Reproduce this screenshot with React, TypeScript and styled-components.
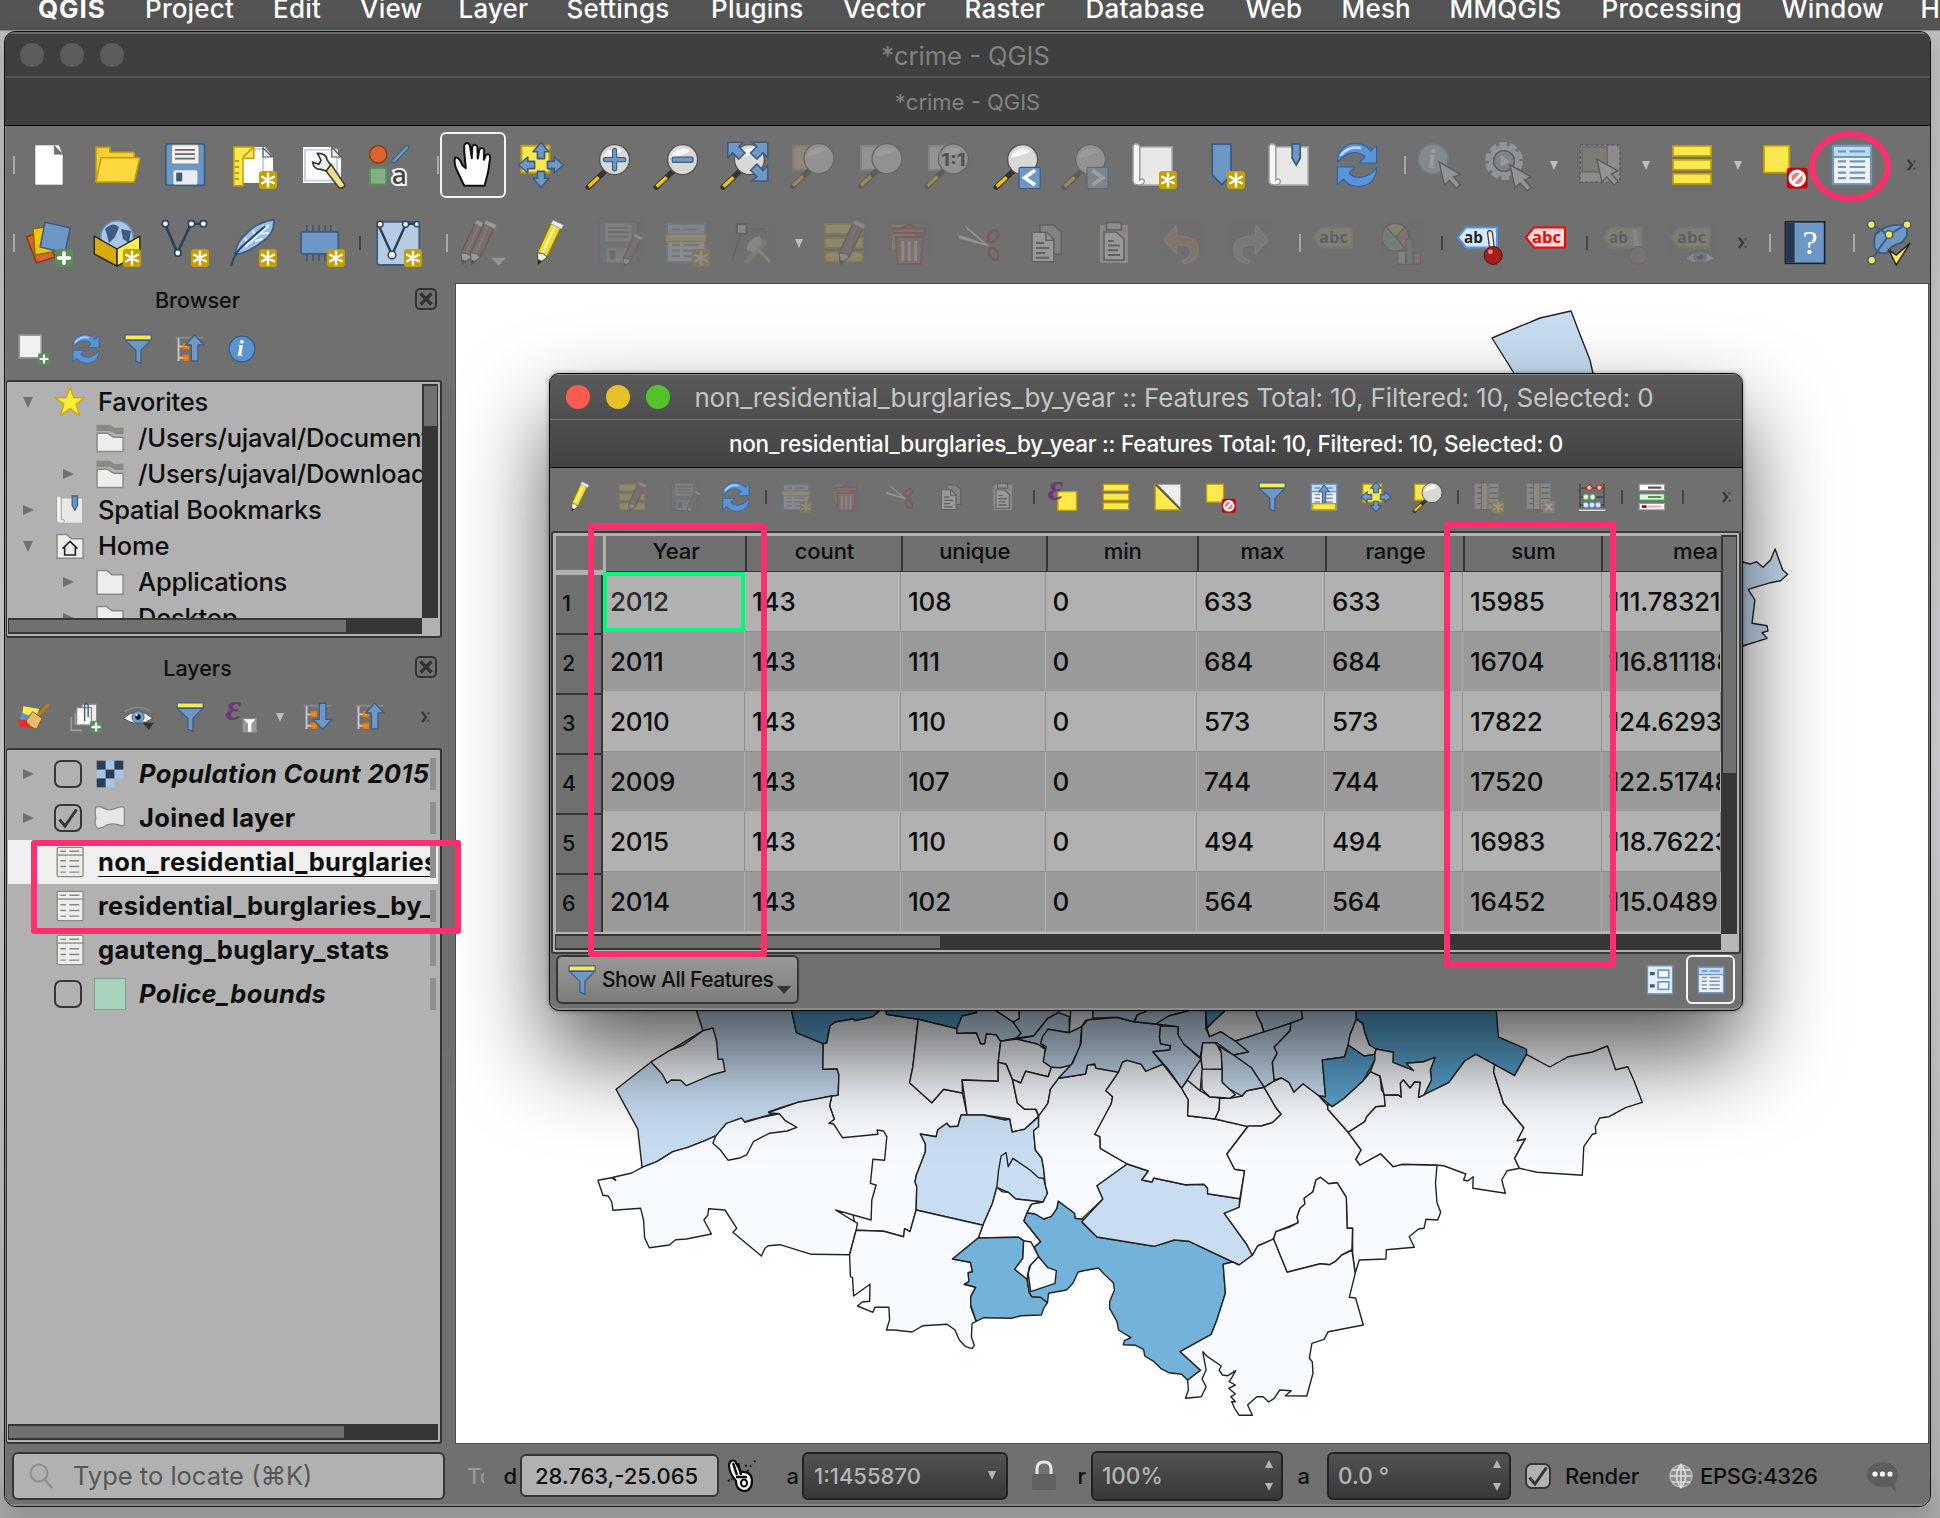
import React from "react";
import styled, { createGlobalStyle } from "styled-components";

const GlobalStyle = createGlobalStyle`
  * { box-sizing: border-box; }
  body { margin: 0; font-family: Inter, "Liberation Sans", sans-serif; color: #0e0e0e; }
`;

/* ------------------------------------------------------------------ icons */

const B = "#6d97c4";
const BD = "#3f5c80";
const Y = "#fce94f";
const YD = "#c4a000";

const Star = () => (
  <g>
    <rect x="15" y="15" width="9" height="9" rx="1.6" fill={YD} />
    <path d="M19.5 16.3V22.7M16.6 17.9L22.4 21.1M22.4 17.9L16.6 21.1" stroke="#fff" strokeWidth="1.2" strokeLinecap="round" />
  </g>
);
const Plus = () => (
  <g>
    <rect x="15" y="15" width="9" height="9" rx="1.6" fill="#5a8c5a" />
    <path d="M19.5 16.8V22.2M16.8 19.5H22.2" stroke="#fff" strokeWidth="1.7" strokeLinecap="round" />
  </g>
);
const Lens = ({ cx = 14.8, cy = 9.3 }: { cx?: number; cy?: number }) => (
  <g>
    <path d={`M${cx - 4.6} ${cy + 5.6}L${cx - 13.2} ${cy + 13.8}`} stroke="#333" strokeWidth="2.7" strokeLinecap="round" />
    <path d={`M${cx - 8} ${cy + 8.8}L${cx - 13} ${cy + 13.5}`} stroke="#f5c211" strokeWidth="1.7" />
    <circle cx={cx} cy={cy} r="7.5" fill="#d8d8d6" stroke="#555753" strokeWidth=".7" />
    <path d={`M${cx - 5.8} ${cy - 1}A6.2 6.2 0 0 1 ${cx + 4} ${cy - 4.4}Q${cx + 1} ${cy - 2} ${cx - 5.8} ${cy - 1}Z`} fill="#f6f6f6" />
  </g>
);
const Cursor = ({ x = 12, y = 11 }: { x?: number; y?: number }) => (
  <path transform={`translate(${x} ${y})`} d="M0 0L2.6 11.5L5 9L8.6 13L10.6 11.2L7.2 7.4L10.6 6Z" fill="#dedede" stroke="#2e3436" strokeWidth=".7" />
);
const Pencil = ({ body = "#f0dc3c", edge = "#8f7902", shine = "#fff9b0" }: { body?: string; edge?: string; shine?: string }) => (
  <g>
    <path d="M14.5 2L19.6 4.2L12.6 19L8.2 22.6L7.6 17Z" fill={body} stroke={edge} strokeWidth=".8" />
    <path d="M16.6 3.2L9.6 18.6" stroke={shine} strokeWidth="1" />
    <path d="M14.4 2.3L15.6 .6L20.7 3L19.8 5Z" fill="#eee" stroke="#999" strokeWidth=".4" />
    <path d="M7.6 17L8.2 22.6L12.6 19L10.4 17.2Z" fill="#eee" stroke="#444" strokeWidth=".5" />
    <path d="M8 20.4L8.1 22.8L10.2 21Z" fill="#222" />
  </g>
);
const DullPencil = () => <Pencil body="#8b6a62" edge="#4a3a35" shine="#a08a84" />;
const Label = ({ fill, edge, text, ink = "#222", len = 14.5 }: { fill: string; edge: string; text: string; ink?: string; len?: number }) => (
  <g transform="translate(-1 .2)">
    <path d="M2 9L6 4H21.5V14H6Z" fill={fill} stroke={edge} strokeWidth="1" strokeLinejoin="round" />
    <text x="5" y="11.8" fontFamily="Open Sans, sans-serif" fontWeight="700" fontSize="8" textLength={len} lengthAdjust="spacingAndGlyphs" fill={ink}>{text}</text>
  </g>
);
const Rows = () => (
  <g fill={Y} stroke={YD} strokeWidth=".9">
    <rect x="2.5" y="2.5" width="19" height="5" />
    <rect x="2.5" y="9.4" width="19" height="5" />
    <rect x="2.5" y="16.4" width="19" height="5" />
  </g>
);
const Table = () => (
  <g>
    <rect x="2.5" y="2.4" width="19" height="19.2" fill="#f2f2f2" stroke={B} strokeWidth="1.1" />
    <rect x="3" y="3" width="18" height="4.6" fill="#bcdcf4" />
    <path d="M2.5 8H21.5" stroke={B} />
    <path d="M5 5.2H9M10.8 5.2H18.6M5 10.2H9M10.8 10.2H18.6M5 13H9M10.8 13H18.6M5 15.8H9M10.8 15.8H18.6M5 18.6H9M10.8 18.6H18.6" stroke={B} strokeWidth="1.1" />
  </g>
);
const Trash = () => (
  <g>
    <rect x="1.6" y="2.6" width="12" height="13" fill="#b9a94a" stroke="#7d6d20" strokeWidth=".6" />
    <path d="M2.6 4.6H18.6V7H2.6ZM7.6 4.4Q10.6 1.5 13.6 4.4M3.8 9H17.4L16.4 22.5H4.8Z" fill="#c17070" stroke="#a02828" strokeWidth="1" />
    <path d="M7.4 11V21M10.6 11V21M13.8 11V21" stroke="#eee" strokeWidth="1.5" />
  </g>
);
const Scissors = () => (
  <g fill="none">
    <path d="M2 8.5L15 13L2 9.4ZM5 4L16 13.5L6 5Z" fill="#eee" stroke="#ddd" strokeWidth=".8" />
    <ellipse cx="18.6" cy="8.6" rx="2.2" ry="3.2" transform="rotate(35 18.6 8.6)" stroke="#8a3030" strokeWidth="1.2" />
    <ellipse cx="18.8" cy="17.4" rx="2.2" ry="3.2" transform="rotate(-30 18.8 17.4)" stroke="#8a3030" strokeWidth="1.2" />
  </g>
);
const Copy = () => (
  <g stroke="#444" strokeWidth=".8">
    <path d="M8 3H15L18.6 6.4V17.6H8Z" fill="#aaa" />
    <path d="M4 6.6H11.4L15 10.4V21.4H4Z" fill="#ededed" />
    <path d="M11 6.8V10.6H15" fill="none" />
    <path d="M6 12H10M6 14.5H12.6M6 17H10.6M6 19.4H12.6" strokeWidth="1" />
  </g>
);
const Paste = () => (
  <g stroke="#444" strokeWidth=".8">
    <rect x="4.5" y="3.5" width="13" height="18" fill="#c9b9a0" stroke="#ccc" />
    <path d="M6 6.5H12L16 10V20.5H6Z" fill="#ededed" />
    <rect x="7.2" y="1.8" width="7.5" height="3.6" fill="#ccc" />
    <path d="M8 11H11M8 13.3H14M8 15.6H13M8 18H14" strokeWidth="1" />
  </g>
);
const Floppy = () => (
  <g>
    <rect x="2.4" y="1.4" width="19.4" height="20.8" rx="1.2" fill={B} stroke={BD} strokeWidth=".9" />
    <rect x="5.2" y="1.9" width="13.8" height="9.6" rx=".8" fill="#f2f2f2" stroke="#777" strokeWidth=".4" />
    <path d="M7 4.4H17M7 6.6H17M7 8.8H17" stroke="#666" strokeWidth=".9" />
    <rect x="6.2" y="14.6" width="12" height="7.2" rx=".8" fill="#ececec" />
    <rect x="7.6" y="15.8" width="3" height="4.4" fill={BD} />
  </g>
);
const Page = () => <path d="M3 3H18L22 8V21H3Z" fill="#fff" />;
const Scroll = () => (
  <g>
    <path d="M5 3H21.5V22H5Z" fill="#e8e8e6" stroke="#aaa" strokeWidth=".8" />
    <path d="M2 3Q2 1.4 3.6 1.4T5.4 3V19.5Q6.6 18.4 7.6 19.6Q8 22 5 22Q2 22 2 20Z" fill="#f6f6f4" stroke="#999" strokeWidth=".7" />
  </g>
);
const Quad = () => (
  <g fill={B} stroke={BD} strokeWidth=".8" strokeLinejoin="round">
    {[0, 90, 180, 270].map((r) => (
      <path key={r} transform={`rotate(${r} 12 12)`} d="M12 .8L16 5.4H13.8V8.8H10.2V5.4H8Z" />
    ))}
  </g>
);
const Funnel = () => (
  <g>
    <path d="M2.5 5.5H21.5L14.2 13V22.8L10.4 21V13Z" fill={B} stroke={BD} strokeWidth=".9" strokeLinejoin="round" />
    <rect x="2.3" y="1.4" width="19.6" height="3.8" fill={Y} stroke={BD} strokeWidth=".9" />
  </g>
);
const Tree = ({ up }: { up?: boolean }) => (
  <g>
    <path d="M1 3.5H22" stroke="#8a8a84" strokeWidth="1.4" />
    <path d="M3.4 4V21M3.4 10H8M3.4 18.6H8" stroke="#c8c8c8" strokeWidth="1.4" />
    <g fill="#ffe08a" stroke="#f57900" strokeWidth="1.8">
      <rect x="7.6" y="8.4" width="2.8" height="2.8" />
      <rect x="7.6" y="17.2" width="2.8" height="2.8" />
    </g>
    <path transform={up ? undefined : "rotate(180 15.5 11.4)"} d="M15.5 1.4L22.6 9H18V21H13V9H8.6Z" fill={B} stroke={BD} strokeWidth="1" strokeLinejoin="round" />
  </g>
);
const Refresh = () => (
  <g fill="#5b93d8" stroke="#2d63a8" strokeWidth=".6" strokeLinejoin="round">
    <path d="M2.2 10.6C2 4.5 7 1 11.6 1.3C15.4 1.4 17.8 3.4 18.8 5L21.8 2.2V11H13L16 8C13 4.6 6.8 5 2.2 10.6Z" />
    <path transform="rotate(180 12 12)" d="M2.2 10.6C2 4.5 7 1 11.6 1.3C15.4 1.4 17.8 3.4 18.8 5L21.8 2.2V11H13L16 8C13 4.6 6.8 5 2.2 10.6Z" />
    <path d="M3.6 7.4Q8 2 14 3.6" stroke="#c4dcf5" strokeWidth="1.2" fill="none" />
  </g>
);
const Forbid = () => (
  <g>
    <rect x="2" y="2.4" width="12.6" height="13.4" fill={Y} stroke={YD} strokeWidth=".9" />
    <rect x="13.4" y="13.4" width="10.4" height="10.4" rx="1.4" fill="#cc0000" />
    <circle cx="18.6" cy="18.6" r="3.6" fill="#e08080" stroke="#fff" strokeWidth="1.5" />
    <path d="M16.2 21.2L21 16" stroke="#fff" strokeWidth="1.5" />
  </g>
);
const Epsilon = () => (
  <text x="-.4" y="14.6" fontFamily="Liberation Serif, serif" fontStyle="italic" fontWeight="700" fontSize="29" fill="#6b3a76">ε</text>
);
const Eye = () => (
  <g>
    <path d="M1 13Q12 3 23 13Q12 21 1 13Z" fill="#f4f4f4" stroke="#444" strokeWidth=".7" />
    <path d="M2 8Q11 2 21 7" stroke="#8a8a84" fill="none" />
    <circle cx="12" cy="12" r="4.6" fill="#729fcf" stroke={BD} strokeWidth=".7" />
    <circle cx="12" cy="12" r="2" fill="#111" />
    <circle cx="11" cy="10.6" r=".8" fill="#fff" />
  </g>
);
const TableCols = () => (
  <g>
    <rect x="2" y="2" width="18" height="19" fill="#bbb" stroke="#888" strokeWidth=".7" />
    <path d="M4 5H8M13 5H19M4 9H8M13 9H19M4 13H8M13 13H19M4 17H8M13 17H19" stroke="#555" />
    <rect x="7" y="1.5" width="5" height="20" fill="#c9c29a" stroke="#555" strokeWidth=".7" />
  </g>
);

const ICONS: Record<string, React.ReactNode> = {
  newFile: <path d="M5 2H17L19 7V22H5ZM14.6 2V6.6H19" fill="#fff" stroke="#707070" strokeWidth=".3" fillRule="evenodd" />,
  folder: (
    <g fill={Y} stroke={YD} strokeWidth=".8" strokeLinejoin="round">
      <path d="M1.5 20.4V3.2H8.4V5.6H20.6V20Z" fill="#f5cf3a" />
      <path d="M1.5 20.5L4 8.4H23.4L20.6 20.5Z" fill="#fbd83f" />
    </g>
  ),
  save: <Floppy />,
  layoutNew: (
    <g>
      <Page />
      <path d="M6 4H17V17" stroke="#c3d3f0" fill="none" />
      <path d="M2.4 3H12.4V8.6H7V22.4H2.4Z" fill={Y} stroke={YD} strokeWidth=".8" />
      <path d="M3 10H5M3 13H5M3 16H5M3 19H5M7 8L12 3.4" stroke={YD} strokeWidth=".9" />
      <path d="M17 3.4V8H21.6Z" fill="#eee" stroke="#555" strokeWidth=".6" />
      <Star />
    </g>
  ),
  layoutManager: (
    <g>
      <Page />
      <rect x="4" y="4.4" width="16" height="15.4" fill="none" stroke="#c3d3f0" />
      <path d="M17.4 3V8H22Z" fill="#eee" stroke="#555" strokeWidth=".6" />
      <path d="M14.4 12.4L17 11.6L24 22Q23.4 24 21 23.4L14 14.4Z" fill="#f1dd8a" stroke="#444" strokeWidth=".8" />
      <path d="M10.2 6.2L12 9.6L11 11.6L7.8 10.6Q8.4 14.4 12 14.2L14.6 15L16.8 12L15 9.4Q14.6 6 10.2 6.2Z" fill="#eee" stroke="#333" strokeWidth=".8" />
    </g>
  ),
  style: (
    <g>
      <circle cx="6.6" cy="6.7" r="4.3" fill="#d8652b" stroke="#8a3d12" strokeWidth=".7" />
      <path d="M14.4 10L21 3.2" stroke={BD} strokeWidth="2.4" strokeLinecap="round" />
      <path d="M14.4 10L21 3.2" stroke={B} strokeWidth="1.3" strokeLinecap="round" />
      <rect x="2.4" y="13.4" width="8.2" height="8.4" fill="#83b083" stroke="#5a8c5a" />
      <text x="13.4" y="21.6" fontFamily="Open Sans, sans-serif" fontSize="13" fontWeight="600" stroke="#f4f4f4" strokeWidth="2" paintOrder="stroke" fill="#444">a</text>
    </g>
  ),
  hand: (
    <path
      d="M7.6 22.4L4.4 15.6Q2.2 11.6 3 8.4Q5 7.6 6.6 12L8.4 13.6L7.6 5V2Q9 0 10.4 2L11.4 8.6L11.6 2.8Q13 .8 14.2 3L14.4 8.8L15.2 4.2Q17 2.6 17.6 4.8L17.4 9.4L18.6 6.8Q20.4 6 20.6 8.2L19.6 15.4L17.8 22.4Z"
      fill="#fff" stroke="#111" strokeWidth="1" strokeLinejoin="round"
    />
  ),
  panSel: (<g><rect x="2.2" y="2.4" width="14" height="13.4" fill={Y} stroke={YD} /><Quad /></g>),
  zoomIn: (<g><Lens /><path d="M14.8 4.7V13.9M10.2 9.3H19.4" stroke={BD} strokeWidth="2.6" strokeLinecap="round" /><path d="M14.8 4.7V13.9M10.2 9.3H19.4" stroke={B} strokeWidth="1.6" strokeLinecap="round" /></g>),
  zoomOut: (<g><Lens /><rect x="9.6" y="8.1" width="10.4" height="2.6" rx=".6" fill={B} stroke={BD} strokeWidth=".6" /></g>),
  zoomFull: (
    <g>
      <Lens cx={14.2} />
      <g fill={B} stroke={BD} strokeWidth=".8">
        <path d="M3.4 .6H11L8.8 2.8L12 6L8.8 9L5.8 5.8L3.4 8.4Z" />
        <path d="M23.4 .6H15.6L18 2.8L14.8 6L18 9L21 5.8L23.4 8.4Z" />
        <path d="M23.4 20H15.6L18 17.8L14.8 14.6L18 11.6L21 14.8L23.4 12.2Z" />
      </g>
    </g>
  ),
  zoomSel: (<g><rect x="2" y="2.4" width="10" height="12" fill={Y} stroke={YD} /><Lens cx={15} cy={8.8} /></g>),
  zoomSelOff: (<g><rect x="2" y="2.4" width="10" height="12" fill="#c9b88a" stroke="#a89660" /><Lens cx={15} cy={8.8} /></g>),
  zoomLayer: (<g><rect x="2" y="2.4" width="10" height="12" fill="#ddd" stroke="#aaa" /><Lens cx={15} cy={8.8} /></g>),
  zoomNative: (<g><rect x="2" y="2.4" width="10" height="12" fill="#ddd" stroke="#aaa" /><Lens cx={14.2} cy={9} /><text x="8" y="12.4" fontSize="9" fontWeight="700" textLength="12.4" lengthAdjust="spacingAndGlyphs" fill="#111">1:1</text></g>),
  zoomLast: (<g><Lens /><rect x="13" y="13.2" width="10.6" height="10.6" rx=".8" fill={B} stroke={BD} strokeWidth=".6" /><path d="M21 14.6L15.8 18.4L21 22" stroke="#fff" strokeWidth="1.8" fill="none" /></g>),
  zoomNext: (<g><Lens /><rect x="13" y="13.2" width="10.6" height="10.6" rx=".8" fill="#9fb4c6" stroke={BD} strokeWidth=".6" /><path d="M15.6 14.6L20.8 18.4L15.6 22" stroke="#fff" strokeWidth="1.8" fill="none" /></g>),
  newMap: (<g><Scroll /><Star /></g>),
  newBookmark: (<g><path d="M7.6 1.6H17V17L12.4 21.8L7.6 17Z" fill={B} stroke={BD} strokeWidth=".9" /><Star /></g>),
  bookmarks: (<g><Scroll /><path d="M13.6 1.4H17.6V8.6L15.6 12L13.6 8.6Z" fill={B} stroke={BD} strokeWidth=".9" /></g>),
  refresh: <Refresh />,
  identify: (
    <g>
      <circle cx="8.6" cy="9" r="7.6" fill="#a9c0d2" stroke="#7d8c98" />
      <text x="6" y="13.6" fontFamily="Liberation Serif, serif" fontStyle="italic" fontWeight="700" fontSize="14" fill="#fff">i</text>
      <Cursor x={11.6} y={10.6} />
    </g>
  ),
  action: (
    <g>
      <circle cx="10" cy="10" r="7.8" fill="none" stroke="#dcdcdc" strokeWidth="3.4" strokeDasharray="3.6 1.3" />
      <circle cx="10" cy="10" r="6.6" fill="#9fb0bc" stroke="#ddd" strokeWidth="2.2" />
      <circle cx="10" cy="10" r="5.2" fill="none" stroke="#333" strokeWidth=".7" />
      <path d="M8.4 7L13 10L8.4 13Z" fill="#eee" />
      <Cursor x={13} y={12} />
    </g>
  ),
  selectRect: (
    <g>
      <rect x="2" y="2" width="20" height="18.6" fill="#c8c8c8" stroke="#333" strokeDasharray="1.6 1" strokeWidth=".8" />
      <rect x="3" y="3" width="12.6" height="12.4" fill="#a19a7c" stroke="#555" strokeWidth=".7" />
      <Cursor x={10.4} y={9} />
    </g>
  ),
  rows: <Rows />,
  deselect: <Forbid />,
  table: <Table />,
  dataSource: (
    <g strokeWidth=".8" stroke="#333">
      <path d="M.8 9L9 6L15 19L5.8 22Z" fill="#d8652b" stroke="#8a3d12" />
      <path d="M4 5L14 3L16 16L5 18Z" fill="#edc70a" stroke="#8a6d02" />
      <path d="M10 1.6L22.6 4.4L20 17L7.6 14Z" fill={B} stroke={BD} />
      <g stroke="none"><Plus /></g>
    </g>
  ),
  geopackage: (
    <g stroke="#222" strokeWidth=".7" strokeLinejoin="round">
      <circle cx="12" cy="9" r="8" fill="#a9c8e8" stroke={B} />
      <path d="M6 5Q10 1 13 4L11 9L8 12L7 8ZM14 5L19 6L18 12L15 10Z" fill={BD} stroke="none" />
      <path d="M.6 8.6L12 15V23.6L.6 17.4Z" fill="#d8aa0c" />
      <path d="M23.4 8.6L12 15V23.6L23.4 17.4Z" fill="#fdf04f" />
      <g stroke="none"><Star /></g>
    </g>
  ),
  shapefile: (
    <g>
      <path d="M2 2.4L8.2 17L15 2.4H21" fill="none" stroke="#26415c" strokeWidth="1.3" />
      <g fill="#fff" stroke="#26415c" strokeWidth=".8"><circle cx="2.2" cy="2.4" r="1.6" /><circle cx="8.4" cy="17" r="1.6" /><circle cx="15.2" cy="2.4" r="1.6" /><circle cx="21.2" cy="2.4" r="1.6" /></g>
      <Star />
    </g>
  ),
  spatialite: (
    <g>
      <path d="M3 17Q4 11 9 7Q14 1.6 22.4 .4Q23 7 17 11Q12 15.4 5 17.6Z" fill="#9fc0e2" stroke={BD} strokeWidth=".9" />
      <path d="M8 14L20 3M8 9.4L9.4 12.6M12 5.8L13.6 9.4M17 3L17.6 5.6M13 11L17 10M16 7.4L20 7" stroke="#eaf2fb" strokeWidth="1" fill="none" />
      <path d="M1.2 23.6Q2 17.4 8 12.4L18 3.6" stroke="#22486e" fill="none" />
      <Star />
    </g>
  ),
  memory: (
    <g>
      <path d="M5 3V21M8 3V21M11 3V21M14 3V21M17 3V16" stroke={BD} strokeWidth=".9" />
      <rect x="2" y="6.4" width="18.6" height="11" rx="1" fill={B} stroke={BD} strokeWidth=".9" />
      <Star />
    </g>
  ),
  virtual: (
    <g>
      <rect x="1.6" y="1.4" width="21" height="21.6" rx="1" fill="#b7cbe3" stroke={BD} strokeWidth=".9" />
      <path d="M2 2.4L9 18L16 2.4H22" fill="none" stroke="#26415c" strokeWidth="1.2" />
      <g fill="#fff" stroke="#26415c" strokeWidth=".7"><circle cx="3" cy="2.6" r="1.5" /><circle cx="9" cy="18" r="1.9" /><circle cx="15.8" cy="2.6" r="1.5" /><circle cx="21.4" cy="2.6" r="1.3" /></g>
      <Star />
    </g>
  ),
  pencils: (<g><g transform="translate(-6 0)"><DullPencil /></g><g transform="translate(-1.4 0)"><DullPencil /></g><path d="M16.6 19.4H24L20.3 23.4Z" fill="#ddd" /></g>),
  pencil: <g transform="translate(-2 0)"><Pencil /></g>,
  saveEdits: (<g><g opacity=".6"><Floppy /></g><g transform="translate(9 7) scale(.74)"><DullPencil /></g></g>),
  addFeature: (<g><Table /><rect x="2" y="7.6" width="20" height="3.6" fill="#f6f0b0" stroke={YD} strokeWidth=".7" /><Star /></g>),
  vertex: (
    <g>
      <path d="M6 5L1 21M6 5H18" stroke="#444" strokeWidth=".8" />
      <rect x="3.4" y="2.6" width="4.8" height="4.8" fill="#eee" stroke="#333" />
      <path d="M8 22L17.6 10.8" stroke="#b9ab6a" strokeWidth="2.6" />
      <path d="M9 15Q10 10 14.6 9.4L15.6 11.4L12 16ZM14 15L20 21.6" stroke="#ddd" strokeWidth="1.4" fill="#ddd" />
    </g>
  ),
  editRows: (<g><Rows /><g transform="translate(2 0)"><DullPencil /></g></g>),
  trash: <Trash />,
  cut: <Scissors />,
  copy: <Copy />,
  paste: <Paste />,
  undo: <path d="M8 3L2 10.6L8.4 17.4V13Q16 12.4 15.4 17Q15 20 11 20.8L12 22.4Q19 21 19 15Q19 8.6 8.4 8.6Z" fill="#c48a66" stroke="#e0b090" strokeWidth=".6" />,
  redo: <path d="M14 3L20 10.6L13.6 17.4V13Q6 12.4 6.6 17Q7 20 11 20.8L10 22.4Q3 21 3 15Q3 8.6 13.6 8.6Z" fill="#8aa488" stroke="#b0c8b0" strokeWidth=".6" />,
  label: <Label fill="#bfb88a" edge="#9a936a" text="abc" />,
  diagram: (
    <g stroke="#444" strokeWidth=".6">
      <circle cx="8.4" cy="9" r="7" fill="#8fae8f" />
      <path d="M8.4 9L3.6 4Q8 .4 13 4Z" fill="#d8cf70" />
      <path d="M8.4 9L13 4Q17 9 12.6 14.6Z" fill="#b87a72" />
      <rect x="9.4" y="16" width="4" height="6.6" fill="#d8cf90" /><rect x="13.6" y="10" width="3.4" height="12.6" fill="#7a9a84" /><rect x="17.4" y="17" width="3.4" height="5.6" fill="#b87a82" />
    </g>
  ),
  labelPin: (<g><Label fill="#d8e8fa" edge="#4f97e8" text="ab" len={9.4} /><path d="M17 7L18 14.6" stroke="#333" strokeWidth="3" strokeLinecap="round" /><path d="M17 7L18 14.6" stroke="#eee" strokeWidth="1.8" strokeLinecap="round" /><circle cx="18.6" cy="18.2" r="4.5" fill="#a81c1c" stroke="#5e0d0d" strokeWidth=".5" /><circle cx="17.2" cy="16.4" r="1.2" fill="#e08a8a" /></g>),
  labelRed: <Label fill="#fde0e0" edge="#f00" text="abc" ink="#f00" />,
  labelPinOff: (<g><Label fill="#bfb88a" edge="#9a936a" text="ab" len={9.4} /><path d="M17 7L18 14.6" stroke="#ddd" strokeWidth="2.4" strokeLinecap="round" /><circle cx="18.6" cy="18.2" r="4.5" fill="#9a7a7a" stroke="#555" strokeWidth=".5" /></g>),
  labelEye: (<g><Label fill="#bfb88a" edge="#9a936a" text="abc" /><g transform="translate(7.6 11) scale(.66)"><Eye /></g></g>),
  help: (
    <g>
      <rect x="2.2" y="1.4" width="19.6" height="20.8" fill={B} stroke="#1c222b" strokeWidth=".8" />
      <rect x="2.6" y="1.8" width="4.2" height="20" fill="#26384e" />
      <text x="10.8" y="17.4" fontFamily="Liberation Serif, serif" fontSize="17" fill="#fff">?</text>
    </g>
  ),
  topology: (
    <g>
      <path d="M5 8Q10 2 20 3Q23 8 18 12Q13 13 11 17Q4 18 4.6 11Z" fill={B} stroke={BD} />
      <path d="M3 2.6L12 8L20.6 2.6M12 8L3 20.6" stroke={BD} fill="none" />
      <g fill={Y} stroke={BD} strokeWidth=".7"><circle cx="3.2" cy="2.8" r="1.9" /><circle cx="21" cy="2.8" r="1.9" /><circle cx="12" cy="7.8" r="1.9" /><circle cx="3.4" cy="20.6" r="1.9" /></g>
      <path d="M12 15.6L15.6 18L22.6 12L15.6 23Z" fill={Y} stroke="#222" strokeWidth=".7" />
    </g>
  ),
  addLayer: (<g><rect x="1" y="1.6" width="16.4" height="17" fill="#f1f1f1" stroke="#9a9a94" strokeWidth="1.2" /><g transform="translate(.4 .4) scale(.98)"><Plus /></g></g>),
  funnel: <Funnel />,
  collapse: <Tree up />,
  expand: <Tree />,
  info: (<g><circle cx="12" cy="12" r="9.6" fill="#5b93cf" stroke="#2d5d96" strokeWidth=".9" /><text x="8.4" y="17.6" fontFamily="Liberation Serif, serif" fontStyle="italic" fontWeight="700" fontSize="17" fill="#fff">i</text></g>),
  styling: (
    <g>
      <path d="M4 4L16 6L13 13L3 11Z" fill={Y} /><path d="M3 9L9 11L8 18L1 15Z" fill="#5b93cf" /><path d="M0 14L8 14L13 20L2 19.6Z" fill="#ef2929" />
      <path d="M22.4 3L15 11" stroke="#c17d11" strokeWidth="2.2" strokeLinecap="round" />
      <path d="M11 8L18 13L14 21Q9 20 6 15Z" fill="#e9b96e" stroke="#8f5902" strokeWidth=".7" />
    </g>
  ),
  addGroup: (<g><path d="M1 12V22H9M4 9V18" stroke="#a0a09a" strokeWidth="1.2" fill="none" /><rect x="9" y="2.4" width="11" height="13" fill="#eee" stroke="#888" /><rect x="5" y="5" width="11" height="13" fill="#fff" stroke="#888" /><path d="M11 15V3Q12.4 0 13.6 3V12" fill="none" stroke={BD} strokeWidth="1.1" /><Plus /></g>),
  eye: (<g><Eye /><path d="M15.4 16.4H24L20 21.6Z" fill="#333" /></g>),
  exprFilter: (<g><Epsilon /><rect x="12.4" y="13" width="10.6" height="10.6" fill="#999" /><path d="M13.4 13.6H22L19 17V23H16.6V17Z" fill="#fff" /></g>),
  exprSelect: (<g><rect x="7.4" y="8" width="14" height="14" fill={Y} stroke={YD} /><Epsilon /></g>),
  invert: (<g><path d="M2.4 2.4V21.6H21.6Z" fill={Y} stroke={YD} /><path d="M4 2.4H21.6V20.6Z" fill="#eee" stroke="#888" strokeWidth=".7" /><path d="M2.6 2.6L21.6 21.6" stroke="#555" strokeWidth="1.2" /></g>),
  moveTop: (<g><Table /><rect x="3.6" y="17" width="17" height="4.6" fill={Y} stroke={YD} /><path d="M12 3L16 8H13.2V16H10.8V8H8Z" fill={B} stroke={BD} strokeWidth=".8" /></g>),
  newField: (<g><TableCols /><Star /></g>),
  delField: (<g><TableCols /><rect x="14" y="15" width="9" height="9" fill="#b99" /><path d="M16 17L21 22M21 17L16 22" stroke="#fff" strokeWidth="1.4" /></g>),
  abacus: (
    <g>
      <path d="M3 2V20M21 2V20M3 5.4H21M3 12H21M3 18H21M1.6 22.4H22.4" stroke="#444" strokeWidth="1" />
      <path d="M2 22H22" stroke="#ddd" strokeWidth="1.2" />
      <g strokeWidth=".7"><g fill="#fbb" stroke="#c00"><circle cx="10" cy="5" r="2" /><circle cx="17.6" cy="5" r="2" /></g><g fill="#dfd" stroke="#7a7"><circle cx="7.4" cy="12" r="2" /><circle cx="12.4" cy="12" r="2" /></g><g fill="#def" stroke={B}><circle cx="7.4" cy="18" r="2" /><circle cx="12" cy="18" r="2" /><circle cx="16.6" cy="18" r="2" /></g></g>
    </g>
  ),
  conditional: (
    <g strokeWidth=".9">
      <rect x="2.4" y="2.4" width="19" height="4.8" fill="#fff" stroke="#999" /><path d="M9 5H19" stroke="#555" strokeWidth="1.6" />
      <rect x="2.4" y="9.6" width="19" height="4.8" fill="#dff5df" stroke="#4e9a4e" /><path d="M9 12H19" stroke="#4e9a4e" strokeWidth="1.6" />
      <rect x="2.4" y="16.8" width="19" height="4.8" fill="#fff" stroke="#999" /><path d="M4.4 19.2H8" stroke="#b00" strokeWidth="2" /><path d="M9 19.2H19" stroke="#f0b0b0" strokeWidth="1.6" />
    </g>
  ),
  formView: (
    <g>
      <rect x="2.6" y="1.4" width="18.8" height="21" fill="#e6eef7" stroke={B} />
      <path d="M4.4 7.2H8M4.4 16.4H8" stroke={BD} strokeWidth="2.4" />
      <g fill="#fff" stroke={B} strokeWidth="1.3"><rect x="10.6" y="4.6" width="8" height="5.6" /><rect x="10.6" y="13.4" width="8" height="5.6" /></g>
    </g>
  ),
  star: <path d="M12 .8L14.8 8.8H23L16.6 13.6L19 22L12 17L5 22L7.4 13.6L1 8.8H9.2Z" fill="#fcef3c" stroke="#cfa900" strokeWidth="1.1" strokeLinejoin="round" />,
  dir: <path d="M2.3 3.4H9.4L13.4 6.6H21.8V21.2H2.3Z" fill="#eee" stroke="#8a8a84" strokeWidth="1.1" />,
  dirStack: (<g><path d="M1.8 2H12L15 4.4H22.2V9H16L12 6.8H1.8Z" fill="#8a8a84" /><path d="M2.3 8.4H10L14.6 11.4H21.8V22.2H2.3Z" fill="#eee" stroke="#8a8a84" strokeWidth="1.1" /></g>),
  home: (<g><path d="M2.3 3.4H9.4L13.4 6.6H21.8V21.2H2.3Z" fill="#eee" stroke="#8a8a84" strokeWidth="1.1" /><path d="M6.4 14L12 8.6L17.6 14M8 13V18.8H16V13" fill="none" stroke="#222" strokeWidth="1.2" /></g>),
  raster: (
    <g fill="#2a3d54">
      <path d="M2 2H22V15.3H15.3V22H2Z" fill="#aac4e4" />
      <rect x="2" y="2" width="6.7" height="6.7" /><rect x="15.3" y="2" width="6.7" height="6.7" /><rect x="8.7" y="8.7" width="6.6" height="6.6" /><rect x="2" y="15.3" width="6.7" height="6.7" />
    </g>
  ),
  polygon: <path d="M1.4 4Q4 2.4 8 5Q12 7 17 4.4Q22.6 2.6 22.8 5V16Q23 18.8 18 17Q13 15.6 9 17.6Q3 21.4 1.6 18.4Q.2 16 1.4 12Q.4 7 1.4 4Z" fill="#e6e6e4" stroke="#8a8a84" />,
  sheet: (
    <g>
      <rect x="2.4" y="1" width="19.4" height="22" rx="1" fill="#ededeb" stroke="#8a8a84" />
      <path d="M2.4 6.8H21.8" stroke="#8a8a84" />
      <path d="M4.8 4H9M11.6 4H19M4.8 11H9M11.6 11H19M4.8 15.4H9M11.6 15.4H19M4.8 19.6H9M11.6 19.6H19" stroke="#8a8a84" strokeWidth="1.1" />
    </g>
  ),
};

const Svg = styled.svg<{ $size: number; $alpha: number }>`
  display: block;
  flex: none;
  width: ${(p) => p.$size}px;
  height: ${(p) => p.$size}px;
  opacity: ${(p) => p.$alpha};
  overflow: visible;
`;
const Icon = ({ name, size = 48, alpha = 1 }: { name: string; size?: number; alpha?: number }) => (
  <Svg $size={size} $alpha={alpha} viewBox="0 0 24 24" fill="none">{ICONS[name]}</Svg>
);

/* ---------------------------------------------------------------- toolbar */

const Bar = styled.div<{ $h: number; $pad?: number; $lift?: number }>`
  display: flex;
  align-items: center;
  height: ${(p) => p.$h}px;
  padding: 0 0 ${(p) => p.$lift ?? 0}px ${(p) => p.$pad ?? 0}px;
`;
const Slot = styled.div<{ $w: number }>`
  flex: none;
  display: flex;
  align-items: center;
  justify-content: center;
  width: ${(p) => p.$w}px;
`;
const ActiveSlot = styled.div`
  flex: none;
  display: grid;
  place-items: center;
  width: 66px;
  height: 66px;
  margin: 0 1px;
  border: 2px solid #f2f2f2;
  border-radius: 6px;
`;
const Handle = styled.div<{ $w: number }>`
  flex: none;
  width: ${(p) => p.$w}px;
  height: 18px;
  border-right: 2px solid #a8a8a8;
`;
const Divider = styled.div<{ $w: number }>`
  flex: none;
  display: flex;
  justify-content: center;
  width: ${(p) => p.$w}px;
  &::after { content: ""; width: 2px; height: 14px; background: #444; }
`;
const Caret = styled.div<{ $w: number; $c?: string }>`
  flex: none;
  display: flex;
  justify-content: center;
  width: ${(p) => p.$w}px;
  &::after {
    content: "";
    border: 4.5px solid transparent;
    border-top: 9px solid ${(p) => p.$c ?? "#bdbdbd"};
    border-bottom: 0;
  }
`;
const More = styled.div<{ $w: number }>`
  flex: none;
  display: flex;
  justify-content: center;
  width: ${(p) => p.$w}px;
`;
const MoreIcon = () => (
  <svg width="12" height="12" viewBox="0 0 12 12"><path d="M2 1L6 6L2 11" fill="none" stroke="#3a3a3a" strokeWidth="2.4" /><path d="M8.5 1V3.4M8.5 8.6V11" stroke="#4a4a4a" strokeWidth="2" /></svg>
);

const Tools = ({ items, slot, size }: { items: string; slot: number; size: number }) => (
  <>
    {items.split(" ").map((t, i) => {
      const [k, n] = t.split(":");
      if (k === "|") return <Divider key={i} $w={+n} />;
      if (k === "h") return <Handle key={i} $w={+n} />;
      if (k === "v") return <Caret key={i} $w={+n} />;
      if (k === ">") return <More key={i} $w={+n}><MoreIcon /></More>;
      if (k[0] === "*") return <ActiveSlot key={i}><Icon name={k.slice(1)} size={size} /></ActiveSlot>;
      const alpha = k[0] === "-" ? 0.32 : k[0] === "~" ? 0.2 : 1;
      return <Slot key={i} $w={slot}><Icon name={alpha < 1 ? k.slice(1) : k} size={size} alpha={alpha} /></Slot>;
    })}
  </>
);

/* ------------------------------------------------------------- main frame */

const Desktop = styled.div`
  position: relative;
  width: 1940px;
  height: 1518px;
  overflow: hidden;
  background: linear-gradient(#bdbdbb, #cfd0d2 50%, #b4b4b4 97%, #a4a6a5);
`;
const MenuBar = styled.div`
  display: flex;
  align-items: center;
  height: 31px;
  padding: 0 0 14px 38px;
  background: #545454;
  border-bottom: 1px solid #8d8d8d;
  color: #fff;
  font-size: 26px;
  font-weight: 500;
  overflow: hidden;
  white-space: nowrap;
`;
const MenuItem = styled.div<{ $w: number; $bold?: boolean }>`
  flex: none;
  width: ${(p) => p.$w}px;
  font-weight: ${(p) => (p.$bold ? 700 : 500)};
  letter-spacing: ${(p) => (p.$bold ? "0.9px" : "0.2px")};
`;
const Frame = styled.div`
  width: 1927px;
  height: 1476px;
  margin-left: 4px;
  border: 1px solid #141414;
  border-radius: 11px 11px 12px 12px;
  background: #707070;
  overflow: hidden;
  box-shadow: 0 8px 20px rgba(0, 0, 0, 0.16);
`;
const Title = styled.div<{ $h: number; $size: number; $c: string; $bg: string; $top?: string; $bottom?: string; $weight?: number }>`
  display: flex;
  align-items: center;
  justify-content: center;
  height: ${(p) => p.$h}px;
  border-top: ${(p) => p.$top ?? "none"};
  border-bottom: ${(p) => p.$bottom ?? "none"};
  background: ${(p) => p.$bg};
  color: ${(p) => p.$c};
  font-size: ${(p) => p.$size}px;
  font-weight: ${(p) => p.$weight ?? 400};
  white-space: nowrap;
`;
const Lights = styled.div<{ $gap: number; $left: number }>`
  display: flex;
  gap: ${(p) => p.$gap}px;
  margin-left: ${(p) => p.$left}px;
`;
const Dot = styled.i<{ $c: string }>`
  width: 24px;
  height: 24px;
  border-radius: 50%;
  background: ${(p) => p.$c};
`;
const TitleText = styled.span<{ $ls?: number }>`
  flex: 1;
  text-align: center;
  letter-spacing: ${(p) => p.$ls ?? 0}px;
`;
const Balance = styled.span<{ $w: number }>`
  width: ${(p) => p.$w}px;
`;
const Content = styled.div`
  padding-left: 1px;
  background: linear-gradient(90deg, #7c7c7c 1px, #707070 1px);
`;
const Work = styled.div`
  display: flex;
  height: 1161px;
`;
const Dock = styled.div`
  flex: none;
  width: 449px;
`;
const Canvas = styled.div`
  width: 1474px;
  border: 1px solid #4f4f4f;
  background: #fff;
`;
const DockTitle = styled.div<{ $h: number; $mt?: number }>`
  display: grid;
  grid-template-columns: 386px 22px;
  align-items: center;
  justify-content: end;
  column-gap: 12px;
  width: 431px;
  height: ${(p) => p.$h}px;
  margin-top: ${(p) => p.$mt ?? 0}px;
  text-align: center;
  font-size: 21.5px;
  font-weight: 500;
`;
const DockName = styled.span`
  padding-right: 25px;
`;
const Close = styled.span`
  display: grid;
  place-items: center;
  width: 22px;
  height: 22px;
  margin-top: -2px;
  border: 2px solid #333;
  border-radius: 5px;
`;
const CloseIcon = () => (
  <Close><svg width="14" height="14" viewBox="0 0 14 14"><path d="M1.5 1.5L12.5 12.5M12.5 1.5L1.5 12.5" stroke="#333" strokeWidth="3.4" /></svg></Close>
);
const ListFrame = styled.div<{ $h: number }>`
  display: flex;
  flex-direction: column;
  width: 436px;
  height: ${(p) => p.$h}px;
  padding: 2px 2px 2px 1px;
  border: 2px solid #363636;
  border-left-width: 1px;
  border-radius: 3px;
  background: #b1b1b1;
`;
const ListArea = styled.div`
  flex: 1;
  min-height: 0;
  display: flex;
`;
const List = styled.div`
  flex: 1;
  min-width: 0;
  overflow: hidden;
`;
const Row = styled.div<{ $h: number; $indent: number; $selected?: boolean; $bold?: boolean; $italic?: boolean }>`
  display: flex;
  align-items: center;
  height: ${(p) => p.$h}px;
  padding-left: ${(p) => p.$indent}px;
  background: ${(p) => (p.$selected ? "#f0f0f0" : "none")};
  font-size: 25.5px;
  font-weight: ${(p) => (p.$bold ? 700 : 450)};
  font-style: ${(p) => (p.$italic ? "italic" : "normal")};
  white-space: nowrap;
  overflow: hidden;
`;
const Arrow = styled.span<{ $open?: boolean; $hidden?: boolean; $w: number }>`
  flex: none;
  width: ${(p) => p.$w}px;
  visibility: ${(p) => (p.$hidden ? "hidden" : "visible")};
  &::before {
    content: "";
    display: block;
    width: 0;
    border: 5.5px solid transparent;
    ${(p) => (p.$open ? "border-top: 11px solid #707070; border-bottom: 0;" : "border-left: 11px solid #707070; border-right: 0;")}
  }
`;
const RowText = styled.span<{ $gap: number; $under?: boolean; $ls?: number }>`
  flex: 1;
  min-width: 0;
  margin-left: ${(p) => p.$gap}px;
  overflow: hidden;
  letter-spacing: ${(p) => p.$ls ?? -0.2}px;
  line-height: 1.35;
  ${(p) => p.$under && "text-decoration: underline; text-decoration-thickness: 1px; text-underline-offset: 5px; text-decoration-skip-ink: none;"}
`;
const Check = styled.span<{ $size: number }>`
  flex: none;
  display: grid;
  place-items: center;
  width: ${(p) => p.$size}px;
  height: ${(p) => p.$size}px;
  border: 2px solid #363636;
  border-radius: 7px;
`;
const CheckMark = () => (
  <svg width="22" height="22" viewBox="0 0 22 22"><path d="M2.5 12.5L8 19L19.5 2.5" fill="none" stroke="#363636" strokeWidth="3" /></svg>
);
const Swatch = styled.span`
  flex: none;
  width: 32px;
  height: 32px;
  border: 1px solid #7fa08f;
  background: #a8d3bd;
`;
const Indicator = styled.span`
  flex: none;
  width: 6px;
  height: 32px;
  margin: 0 2px 0 -2px;
  background: #8f8f8f;
`;
const VTrack = styled.div<{ $thumb: number }>`
  flex: none;
  width: 16px;
  padding: 2px 1px 0 2px;
  background: #363636;
  &::before { content: ""; display: block; height: ${(p) => p.$thumb}px; background: #707070; }
`;
const HTrack = styled.div<{ $thumb: number; $right?: number }>`
  flex: none;
  height: 16px;
  margin-right: ${(p) => p.$right ?? 0}px;
  padding: 2px 2px 2px 1px;
  background: #363636;
  &::before { content: ""; display: block; width: ${(p) => p.$thumb}px; height: 12px; background: #707070; }
`;

type TreeItem = { x: number; arrow?: "open" | "closed"; icon: string; text: string };
const BROWSER: TreeItem[] = [
  { x: 15, arrow: "open", icon: "star", text: "Favorites" },
  { x: 55, icon: "dirStack", text: "/Users/ujaval/Documents" },
  { x: 55, arrow: "closed", icon: "dirStack", text: "/Users/ujaval/Downloads" },
  { x: 15, arrow: "closed", icon: "bookmarks", text: "Spatial Bookmarks" },
  { x: 15, arrow: "open", icon: "home", text: "Home" },
  { x: 55, arrow: "closed", icon: "dir", text: "Applications" },
  { x: 55, arrow: "closed", icon: "dir", text: "Desktop" },
];

type LayerItem = { arrow?: boolean; check?: boolean; checked?: boolean; icon: string; text: string; italic?: boolean; selected?: boolean };
const LAYERS: LayerItem[] = [
  { arrow: true, check: true, icon: "raster", text: "Population Count 2015", italic: true },
  { arrow: true, check: true, checked: true, icon: "polygon", text: "Joined layer" },
  { icon: "sheet", text: "non_residential_burglaries_by_year", selected: true },
  { icon: "sheet", text: "residential_burglaries_by_year" },
  { icon: "sheet", text: "gauteng_buglary_stats" },
  { check: true, icon: "swatch", text: "Police_bounds", italic: true },
];

/* -------------------------------------------------------------------- map */

type Pt = [number, number];
const sheet = (ox: number, oy: number, sx: number, sy: number) => (s: string): Pt[] =>
  s.trim().split(/\s+/).map((p) => {
    const [x, y] = p.split(",").map(Number);
    return [ox + x / sx, oy + y / sy] as Pt;
  });
const w = sheet(580, 1000, 2.8, 3);
const e = sheet(1080, 1000, 2.7034, 3);
const n = sheet(1140, 360, 2.376, 3);
const c = sheet(0, 0, 1, 1);
const WHITE = "#f7fbff";
const LIGHT = "#c8ddf2";
const MID = "#73b2d9";
const DEEP = "#5ba4d0";

const REGIONS: [string, Pt[]][] = [
  [LIGHT, c("1492,338 1540,318 1571,311 1579,332 1590,360 1594,378 1517,378")],
  [LIGHT, n("1420,606 1432,606 1450,612 1465,605 1480,622 1498,600 1509,567 1527,630 1539,643 1522,662 1498,668 1445,688 1461,720 1454,790 1490,797 1492,813 1478,818 1490,835 1432,858 1420,860")],
  [LIGHT, w("320,10 344,92 199,186 101,268 162,388 163,400 174,502 215,485 260,455 300,443 345,424 375,410 470,362 540,342 528,336 570,320 610,307 645,302 690,291 723,286 725,225 720,206 680,208 681,131 606,98 588,10")],
  [WHITE, w("344,92 372,84 382,120 387,178 400,178 406,214 370,224 298,257 282,241 255,240 244,250 230,222 199,186 250,152 290,135")],
  [DEEP, w("588,10 606,98 681,131 691,129 700,78 715,66 765,57 770,62 820,50 842,28 842,10")],
  [WHITE, w("842,10 838,33 820,50 770,62 765,57 715,66 700,78 691,129 681,131 680,208 720,206 725,225 723,286 705,288 699,317 712,358 697,370 718,385 773,691 850,694 906,710 909,686 924,695 941,630 943,560 938,545 942,525 967,455 967,432 953,402 997,410 1002,389 1027,370 1035,380 1058,379 1067,345 1084,345 1071,279 1018,268 985,308 923,248 932,200 947,58 858,43 856,10")],
  [DEEP, w("858,10 858,43 947,58 1055,86 1070,48 1110,38 1110,10")],
  [WHITE, w("174,502 145,519 93,532 100,541 88,533 50,541 64,586 79,588 89,606 92,631 170,625 178,662 181,713 194,743 250,735 268,719 298,717 368,702 347,660 358,645 360,626 406,630 439,685 428,697 508,768 518,745 527,737 560,734 648,763 755,764 773,691 777,670 715,630 815,660 817,600 829,555 813,550 820,478 853,481 859,410 850,393 832,390 834,403 735,413 718,385 710,372 697,370 712,358 699,317 705,288 645,300 610,307 528,338 558,341 462,367 375,410 345,424 300,443 260,455 215,485")],
  [WHITE, w("558,341 575,362 607,382 580,393 530,400 486,424 467,464 450,473 415,481 393,450 372,430 380,408 410,370 452,354 462,367 510,352")],
  [WHITE, w("947,58 1055,86 1055,100 1110,98 1122,131 1133,131 1138,101 1165,104 1178,124 1171,187 1171,244 1070,240 1071,279 1018,268 985,308 923,248 932,200")],
  [LIGHT, w("1055,86 1070,48 1110,38 1110,10 1165,10 1165,32 1213,66 1235,100 1222,114 1178,124 1165,104 1138,101 1133,131 1122,131 1110,98 1055,100")],
  [WHITE, w("1165,10 1165,32 1213,66 1230,56 1230,10")],
  [LIGHT, w("1230,10 1230,56 1213,66 1235,100 1222,114 1270,108 1295,75 1310,55 1340,38 1340,10")],
  [LIGHT, w("1222,117 1270,108 1295,75 1310,55 1340,38 1370,50 1370,98 1310,88 1290,130 1303,148 1280,132")],
  [WHITE, w("1375,10 1370,98 1405,80 1415,62 1437,55 1437,10")],
  [WHITE, w("1178,124 1222,117 1280,132 1303,148 1300,185 1320,202 1311,230 1248,214 1234,249 1211,238 1193,193 1171,187")],
  [WHITE, w("1171,244 1171,187 1193,193 1211,240 1225,310 1245,328 1275,328 1284,348 1245,388 1210,396 1203,357 1130,345 1084,345 1070,240")],
  [WHITE, w("1211,238 1234,249 1248,214 1311,230 1320,202 1375,195 1340,235 1317,268 1310,310 1285,350 1277,328 1245,328 1225,310")],
  [LIGHT, w("1310,88 1370,98 1405,80 1400,140 1375,195 1345,203 1320,202 1297,185 1305,140 1290,130 1295,110")],
  [LIGHT, w("1084,345 1130,345 1190,360 1203,357 1210,396 1245,388 1284,350 1284,380 1270,392 1275,450 1293,475 1298,505 1303,556 1309,580 1297,606 1220,597 1199,577 1167,562 1155,610 1128,676 941,630 943,560 938,545 942,525 967,455 967,432 953,402 997,410 1002,389 1027,370 1035,380 1058,379 1067,345")],
  [LIGHT, w("1167,562 1172,510 1179,468 1193,458 1199,500 1212,475 1260,510 1284,533 1298,535 1303,556 1309,580 1297,606 1220,597 1199,577")],
  [WHITE, w("1167,562 1182,575 1199,577 1220,597 1297,606 1262,615 1252,638 1243,662 1290,725 1272,742 1242,722 1228,712 1115,714 1128,676 1155,610")],
  [WHITE, w("941,630 1128,676 1115,714 1043,777 1093,787 1099,815 1087,818 1089,845 1076,853 1108,862 1094,890 1094,920 1109,964 1098,970 1096,1010 1104,1036 1098,1046 1080,1040 1062,1020 1050,990 1028,973 960,977 930,996 880,990 858,990 867,960 865,922 826,922 820,937 777,918 790,906 811,904 812,853 766,888 763,833 757,830 755,764 773,691 850,694 906,710 909,686 924,695")],
  [MID, w("1115,714 1228,712 1242,722 1240,775 1217,808 1252,838 1258,878 1265,890 1290,892 1309,908 1298,925 1292,945 1235,947 1208,955 1130,953 1109,964 1094,915 1094,890 1108,862 1076,853 1089,845 1087,818 1099,815 1093,787 1043,777")],
  [MID, [...w("1243,662 1252,638 1275,642 1298,657 1320,649 1335,625 1339,603 1385,640 1387,655 1413,657 1407,668"), ...e("46,711 200,739 255,720 295,724 413,786 387,793 393,880 370,960 355,1003 271,1055 326,1111 291,1141 275,1123 240,1118 218,1105 200,1085 175,1068 172,1048 150,1036 117,1034 120,1022 138,1013 104,990 100,965 80,925 80,905 93,870 90,848 65,822 50,804"), ...w("1410,812 1395,816 1380,850 1362,870 1312,880 1309,908 1290,892 1265,890 1258,878 1252,838 1284,770 1272,742 1290,725")]],
  [WHITE, w("1242,722 1263,726 1284,770 1258,800 1252,838 1217,808 1240,775")],
  [WHITE, w("1284,770 1310,803 1334,812 1330,850 1262,875 1255,820 1262,795")],
  [WHITE, [...w("1340,235 1415,222 1422,192 1443,196"), ...e("104,217 70,272 88,290 85,310 60,370 40,403 54,410 55,445 128,492 46,557 62,597 5,657"), ...w("1387,655 1385,640 1339,603 1335,625 1320,649 1298,657 1275,642 1252,638 1265,612 1297,606 1309,580 1303,556 1298,505 1293,475 1275,450 1270,392 1284,380 1284,348 1310,310 1317,268")]],
  [LIGHT, e("128,492 185,513 167,540 195,546 199,534 285,554 335,553 345,565 345,581 432,596 430,622 390,640 450,732 466,766 430,795 413,786 295,724 255,720 200,739 46,711 5,665 62,597 46,557")],
  [LIGHT, e("3,130 5,80 20,60 100,52 145,65 205,72 218,77 215,110 218,131 245,137 243,150 197,155 224,193 178,214 165,193 127,181 115,187 104,217 43,205 40,192 20,196 15,222 -58,235 -20,190")],
  [LIGHT, e("35,10 35,55 100,52 145,65 155,45 178,35 178,10")],
  [LIGHT, e("178,10 178,35 155,45 148,65 205,72 240,48 300,30 300,10")],
  [LIGHT, e("300,10 300,30 240,48 205,72 265,80 265,105 280,132 325,172 332,128 370,128 415,165 456,156 420,123 380,95 350,110 340,85 340,10")],
  [DEEP, e("338,10 343,85 360,65 390,35 390,10")],
  [WHITE, e("343,85 360,65 390,35 390,10 475,10 478,45 490,70 498,98 420,123 380,95 350,110")],
  [LIGHT, e("475,10 478,45 490,70 498,98 602,56 595,10")],
  [WHITE, e("104,217 115,187 127,181 165,193 178,214 224,193 275,265 293,300 291,347 365,357 455,378 397,462 418,508 445,512 432,596 345,581 345,565 335,553 285,554 199,534 195,546 167,540 185,513 128,492 55,445 54,410 40,403 85,310 88,290 70,272")],
  [LIGHT, e("218,77 265,80 265,105 280,132 327,178 290,240 275,265 240,210 197,155 243,150 245,137 218,131 215,110")],
  [WHITE, e("275,265 290,240 325,272 350,290 378,294 376,330 365,357 291,347 293,300")],
  [WHITE, e("378,294 405,295 438,288 450,272 498,262 528,320 544,343 520,368 490,378 455,380 365,357 376,330")],
  [LIGHT, e("420,123 570,70 568,92 525,142 533,160 520,187 525,243 498,262 463,203 415,165 456,156")],
  [LIGHT, e("372,137 415,165 463,203 498,262 450,272 438,288 400,265 384,247 384,208")],
  [WHITE, e("327,172 332,128 365,128 380,150 384,208 384,247 420,284 405,295 350,290 330,268")],
  [WHITE, e("330,207 384,208 382,160 372,137 365,128 332,128 327,172")],
  [WHITE, e("327,178 330,207 325,272 290,240 305,212")],
  [LIGHT, e("595,10 602,56 570,70 568,92 525,142 533,160 520,187 525,240 545,234 565,248 578,277 603,252 646,288 664,290 655,180 715,171 725,135 730,105 747,58 747,10")],
  [DEEP, e("747,10 747,55 764,70 770,98 782,135 800,147 847,157 846,187 902,212 882,190 930,185 960,172 947,210 950,240 930,285 997,248 1040,183 1070,163 1121,194 1175,227 1207,163 1207,148 1131,111 1124,10")],
  [WHITE, e("747,58 764,70 770,98 782,135 800,147 797,165 768,168 725,135 730,105")],
  [DEEP, e("655,180 715,171 725,135 768,168 797,163 797,180 765,243 712,297 682,320 646,288 664,290")],
  [WHITE, e("455,378 490,378 520,368 544,343 528,320 498,262 525,243 545,234 565,248 578,277 603,252 646,288 670,318 670,328 725,397 760,450 746,478 757,495 813,461 847,500 870,493 965,495 961,550 965,608 975,637 967,660 935,658 930,685 915,687 890,710 904,742 828,749 827,777 755,780 744,820 737,760 737,685 722,685 720,592 695,548 672,551 650,532 638,540 630,575 606,595 608,612 595,625 587,650 590,668 530,695 523,717 480,738 466,766 450,732 390,640 430,622 445,512 418,508 397,462")],
  [WHITE, e("523,717 530,695 565,682 590,668 587,650 595,625 608,612 606,595 630,575 638,540 650,532 672,551 695,548 720,592 722,685 737,685 735,750 708,765 690,785 675,794 650,791 560,817")],
  [WHITE, e("466,766 480,738 523,717 560,817 650,791 675,794 690,785 708,765 735,750 744,820 728,892 745,894 766,975 671,995 660,1018 627,1030 620,1075 628,1085 630,1120 613,1188 555,1187 571,1172 540,1170 525,1195 510,1206 495,1190 478,1190 453,1215 466,1246 430,1246 418,1225 410,1205 420,1205 408,1190 420,1182 402,1165 420,1155 403,1145 412,1130 421,1112 400,1127 385,1125 376,1110 382,1098 345,1070 332,1055 341,1110 330,1137 341,1160 328,1190 285,1195 293,1170 291,1141 326,1111 271,1055 355,1003 370,960 393,880 387,793 413,786 430,795")],
  [WHITE, e("785,215 811,228 815,270 825,285 825,318 800,320 775,350 770,365 725,397 670,328 670,312 682,320 712,297 765,243")],
  [WHITE, e("725,397 770,365 775,350 800,320 825,318 822,285 860,284 868,291 866,250 874,239 892,263 905,245 920,247 915,292 997,248 1040,183 1070,163 1121,194 1118,215 1145,310 1200,383 1182,422 1204,416 1175,475 1188,505 1155,512 1140,540 1150,580 1062,565 1063,530 1048,543 1037,540 1043,522 985,498 965,495 870,493 847,500 813,461 757,495 746,478 760,450")],
  [WHITE, e("797,165 800,147 847,157 846,187 902,212 882,190 930,185 960,172 947,210 950,240 930,285 915,292 920,247 905,245 892,263 874,239 866,250 868,291 860,284 822,285 811,228 785,215 797,180")],
  [WHITE, e("1121,194 1175,227 1207,163 1270,201 1320,170 1385,156 1426,138 1448,209 1481,200 1498,243 1520,307 1475,323 1430,350 1405,354 1393,380 1395,400 1385,403 1362,440 1358,526 1235,517 1188,505 1175,475 1204,416 1182,422 1200,383 1145,310 1118,215")],
];

const MapSvg = styled.svg`
  display: block;
`;
const MapView = () => (
  <MapSvg width="1472" height="1159" viewBox="456 284 1472 1159">
    <g stroke="#232323" strokeWidth="1.4" strokeLinejoin="round">
      {REGIONS.map(([fill, pts], i) => (
        <polygon key={i} fill={fill} points={pts.map((p) => p[0].toFixed(1) + "," + p[1].toFixed(1)).join(" ")} />
      ))}
    </g>
  </MapSvg>
);

/* ------------------------------------------------------------- status bar */

const Status = styled.div`
  display: flex;
  align-items: center;
  height: 62px;
  padding: 3px 0 0 6px;
  border-bottom: 2px solid #858585;
  font-size: 22px;
  font-weight: 500;
  white-space: nowrap;
`;
const Field = styled.div<{ $w: number; $h: number; $ml: number; $size: number; $pad: number }>`
  flex: none;
  display: flex;
  align-items: center;
  width: ${(p) => p.$w}px;
  height: ${(p) => p.$h}px;
  margin-left: ${(p) => p.$ml}px;
  padding-left: ${(p) => p.$pad}px;
  border: 2px solid #363636;
  border-radius: 6px;
  background: #b1b1b1;
  font-size: ${(p) => p.$size}px;
`;
const Locator = styled(Field)`
  gap: 19px;
  color: #565656;
  font-weight: 400;
`;
const DarkField = styled(Field)`
  justify-content: space-between;
  padding-right: 8px;
  border-color: #222;
  background: linear-gradient(#525252, #383838);
  color: #b5b5b5;
  font-weight: 450;
`;
const Spin = styled.span`
  display: flex;
  flex-direction: column;
  gap: 15px;
  &::before, &::after { content: ""; border: 4.5px solid transparent; }
  &::before { border-bottom: 8px solid #b5b5b5; border-top: 0; }
  &::after { border-top: 8px solid #b5b5b5; border-bottom: 0; }
`;
const Cut = styled.span<{ $ml: number; $w: number; $faded?: boolean; $right?: boolean }>`
  flex: none;
  display: flex;
  justify-content: ${(p) => (p.$right ? "flex-end" : "flex-start")};
  width: ${(p) => p.$w}px;
  margin-left: ${(p) => p.$ml}px;
  overflow: hidden;
  color: ${(p) => (p.$faded ? "#999" : "#111")};
`;
const Art = styled.svg<{ $ml: number }>`
  flex: none;
  display: block;
  margin-left: ${(p) => p.$ml}px;
`;
const StatusText = styled.span<{ $ml: number; $w: number; $ls: number }>`
  flex: none;
  width: ${(p) => p.$w}px;
  margin-left: ${(p) => p.$ml}px;
  letter-spacing: ${(p) => p.$ls}px;
`;
const StatusCheck = styled(Check)<{ $ml: number }>`
  margin-left: ${(p) => p.$ml}px;
  background: #b1b1b1;
`;

/* -------------------------------------------------- attribute table window */

const Dialog = styled.div`
  position: absolute;
  left: 549px;
  top: 373px;
  width: 1194px;
  height: 638px;
  border: 1px solid #0c0c0c;
  border-radius: 10px;
  background: #707070;
  box-shadow: 0 44px 90px rgba(0, 0, 0, 0.65), 0 0 4px rgba(0, 0, 0, 0.4), inset 0 -2px 0 #8c8c8c;
  overflow: hidden;
`;
const TableFrame = styled.div`
  display: grid;
  grid-template-columns: 1166px 16px;
  grid-template-rows: 397px 2px 16px;
  width: 1190px;
  height: 423px;
  margin-left: 1px;
  padding: 2px 2px 2px 2px;
  border: 2px solid #3a3a3a;
  border-radius: 3px;
  background: #b1b1b1;
`;
const Grid = styled.div`
  padding: 1px 0 0 1px;
  overflow: hidden;
`;
const HeadRow = styled.div`
  display: grid;
  grid-template-columns: 50px 141px 156px 144.5px 151.5px 128px 138px 138px 1fr;
  height: 36px;
`;
const Corner = styled.div`
  height: 37px;
  width: 47px;
  background: #707070;
  border-bottom: 3px solid #b1b1b1;
`;
const HeadCell = styled.div<{ $last?: boolean }>`
  display: flex;
  align-items: center;
  justify-content: ${(p) => (p.$last ? "flex-start" : "center")};
  padding: 0 0 5px ${(p) => (p.$last ? 70 : 1)}px;
  border-right: ${(p) => (p.$last ? "none" : "2px solid #363636")};
  border-bottom: 2px solid #363636;
  background: #707070;
  font-size: 22px;
  font-weight: 450;
  letter-spacing: -0.1px;
  overflow: hidden;
`;
const Body = styled.div`
  display: flex;
`;
const Heads = styled.div`
  width: 47px;
  margin-top: 3px;
  border-right: 2px solid #363636;
`;
const Head = styled.div`
  display: flex;
  align-items: center;
  height: 60px;
  padding: 0 0 3px 6px;
  border-bottom: 2px solid #363636;
  background: #707070;
  font-size: 21.5px;
  font-weight: 450;
`;
const Records = styled.div`
  flex: 1;
  min-width: 0;
`;
const Record = styled.div<{ $alt: boolean }>`
  display: grid;
  grid-template-columns: 142px 156px 144.5px 151.5px 128px 138px 138.5px 1fr;
  height: 60px;
  background: ${(p) => (p.$alt ? "#9a9a9a" : "#b1b1b1")};
`;
const Cell = styled.div<{ $alt: boolean; $active?: boolean }>`
  display: flex;
  align-items: center;
  min-width: 0;
  padding: 0 0 1px ${(p) => (p.$active ? 3 : 7)}px;
  border: ${(p) => (p.$active ? "4px solid #00fa78" : `0 solid ${p.$alt ? "#adadad" : "#8e8e8e"}`)};
  ${(p) => (p.$active ? "border-radius: 2px; color: #2a2a2a;" : "border-right-width: 1px; border-bottom-width: 1px;")}
  font-size: 26px;
  font-weight: 450;
  letter-spacing: -0.2px;
  overflow: hidden;
`;
const ScrollCorner = styled.div`
  background: #b8b8b8;
`;
const DialogFoot = styled.div`
  display: flex;
  align-items: center;
  height: 54px;
  padding: 0 7px 3px 6px;
`;
const FilterButton = styled.div`
  display: flex;
  align-items: center;
  width: 243px;
  height: 49px;
  padding-left: 8px;
  border: 2px solid #363636;
  border-radius: 6px;
  background: linear-gradient(#999, #7c7c7c);
  font-size: 21px;
  font-weight: 500;
`;
const FilterText = styled.span`
  width: 176px;
  margin-left: 4px;
  white-space: nowrap;
  letter-spacing: -0.5px;
`;
const FilterCaret = styled(Caret)`
  align-self: flex-end;
  margin-bottom: 8px;
  &::after { border-width: 7px; border-top-width: 8px; border-bottom: 0; }
`;
const FormSlot = styled.div`
  margin: 0 10px 0 auto;
`;
const ViewButton = styled.div`
  display: grid;
  place-items: center;
  width: 49px;
  height: 49px;
  border: 2px solid #f4f4f4;
  border-radius: 6px;
`;

const DATA: string[][] = [
  ["2012", "143", "108", "0", "633", "633", "15985", "111.783216"],
  ["2011", "143", "111", "0", "684", "684", "16704", "116.811188"],
  ["2010", "143", "110", "0", "573", "573", "17822", "124.629370"],
  ["2009", "143", "107", "0", "744", "744", "17520", "122.517482"],
  ["2015", "143", "110", "0", "494", "494", "16983", "118.762237"],
  ["2014", "143", "102", "0", "564", "564", "16452", "115.048951"],
];
const COLUMNS = ["Year", "count", "unique", "min", "max", "range", "sum", "mean"];
const DIALOG_TITLE = "non_residential_burglaries_by_year :: Features Total: 10, Filtered: 10, Selected: 0";

const Mark = styled.div<{ $x: number; $y: number; $w: number; $h: number; $round?: boolean }>`
  position: absolute;
  left: ${(p) => p.$x}px;
  top: ${(p) => p.$y}px;
  width: ${(p) => p.$w}px;
  height: ${(p) => p.$h}px;
  border: 6px solid #ff2e6d;
  border-radius: ${(p) => (p.$round ? "50%" : "3px")};
`;

const MENU: [string, number][] = [
  ["QGIS", 107], ["Project", 128], ["Edit", 87], ["View", 98.5], ["Layer", 108], ["Settings", 144.5], ["Plugins", 132], ["Vector", 121.5],
  ["Raster", 121], ["Database", 160], ["Web", 96], ["Mesh", 108], ["MMQGIS", 152], ["Processing", 180], ["Window", 139], ["Help", 90],
];

export default function App() {
  return (
    <Desktop>
      <GlobalStyle />
      <MenuBar>
        {MENU.map(([t, width]) => <MenuItem key={t} $w={width} $bold={t === "QGIS"}>{t}</MenuItem>)}
      </MenuBar>
      <Frame>
        <Title $h={44} $size={25.5} $c="#828282" $bg="#3f3f3f" $top="2px solid #6c6c6c">
          <Lights $gap={16} $left={15}>{[0, 1, 2].map((i) => <Dot key={i} $c="#5c5c5c" />)}</Lights>
          <TitleText>*crime - QGIS</TitleText>
          <Balance $w={123} />
        </Title>
        <Title $h={50} $size={22} $c="#828282" $bg="#3f3f3f" $top="2px solid #555" $bottom="1px solid #050505">*crime - QGIS</Title>
        <Content>
          <Bar $h={78}>
            <Tools slot={68} size={48} items="h:9 newFile folder save layoutNew layoutManager style h:16 *hand panSel zoomIn zoomOut zoomFull -zoomSelOff -zoomLayer -zoomNative zoomLast -zoomNext newMap newBookmark bookmarks refresh h:15 -identify -action v:24 -selectRect v:24 rows v:24 deselect table >:52" />
          </Bar>
          <Bar $h={79} $lift={1}>
            <Tools slot={68} size={48} items="h:9 dataSource geopackage shapefile spatialite memory |:9 virtual h:16 -pencils pencil ~saveEdits ~addFeature ~vertex v:22 ~editRows ~trash -cut -copy -paste ~undo ~redo h:15 ~label ~diagram |:9 labelPin labelRed |:9 ~labelPinOff ~labelEye >:32 h:12 help h:16 topology" />
          </Bar>
          <Work>
            <Dock>
              <DockTitle $h={34}><DockName>Browser</DockName><CloseIcon /></DockTitle>
              <Bar $h={63} $pad={2}>
                <Tools slot={52} size={32} items="addLayer refresh funnel collapse info" />
              </Bar>
              <ListFrame $h={258}>
                <ListArea>
                  <List>
                    {BROWSER.map((r) => (
                      <Row key={r.text} $h={36} $indent={r.x}>
                        <Arrow $w={31} $open={r.arrow === "open"} $hidden={!r.arrow} />
                        <Icon name={r.icon} size={32} />
                        <RowText $gap={12}>{r.text}</RowText>
                      </Row>
                    ))}
                  </List>
                  <VTrack $thumb={40} />
                </ListArea>
                <HTrack $thumb={337} $right={16} />
              </ListFrame>
              <DockTitle $h={36} $mt={12}><DockName>Layers</DockName><CloseIcon /></DockTitle>
              <Bar $h={62} $pad={2}>
                <Tools slot={52} size={32} items="styling addGroup eye funnel exprFilter v:24 expand collapse >:60" />
              </Bar>
              <ListFrame $h={696}>
                <ListArea>
                  <List>
                    {LAYERS.map((r) => (
                      <Row key={r.text} $h={44} $indent={15} $bold $italic={r.italic} $selected={r.selected}>
                        <Arrow $w={31} $hidden={!r.arrow} />
                        {r.check && <Check $size={28}>{r.checked && <CheckMark />}</Check>}
                        {r.check && <Slot $w={12} />}
                        {r.icon === "swatch" ? <Swatch /> : <Icon name={r.icon} size={32} />}
                        <RowText $gap={r.check ? 13 : 12} $under={r.selected} $ls={0.35}>{r.text}</RowText>
                        <Indicator />
                      </Row>
                    ))}
                  </List>
                </ListArea>
                <HTrack $thumb={335} />
              </ListFrame>
            </Dock>
            <Canvas><MapView /></Canvas>
          </Work>
          <Status>
            <Locator $w={433} $h={48} $ml={0} $size={25.5} $pad={14}>
              <svg width="26" height="28" viewBox="0 0 26 28"><circle cx="11" cy="11" r="8.5" fill="none" stroke="#909090" strokeWidth="2.2" /><path d="M17 18L24 26" stroke="#909090" strokeWidth="2.6" /></svg>
              <span>Type to locate (⌘K)</span>
            </Locator>
            <Cut $ml={22} $w={17} $faded>To</Cut>
            <Cut $ml={20} $w={13} $right>d</Cut>
            <Field $w={199} $h={43} $ml={3} $size={22} $pad={13}>28.763,-25.065</Field>
            <Art $ml={8} width="32" height="34" viewBox="0 0 32 34">
              <path d="M2 6Q3 0 8 2L14 13Q24 12 25 21Q25 32 17 32Q9 31 9 22Q2 14 2 6Z" fill="#fff" stroke="#0a0a0a" strokeWidth="2.2" />
              <path d="M6 4L10 16M11 4L14 16M9 18H20" stroke="#0a0a0a" strokeWidth="2.4" />
              <ellipse cx="17" cy="24" rx="3" ry="3.6" fill="none" stroke="#0a0a0a" strokeWidth="2" />
              <path d="M18 7L20 6M23 8L25 5M27 3L29 1M20 12L23 11M1 22L5 20" stroke="#111" strokeWidth="2" strokeDasharray="2 1.5" />
            </Art>
            <Cut $ml={27} $w={13} $right>a</Cut>
            <DarkField $w={206} $h={48} $ml={3} $size={22} $pad={10}>1:1455870<Caret $w={12} $c="#b5b5b5" /></DarkField>
            <Art $ml={23} width="26" height="32" viewBox="0 0 26 32"><path d="M6 15V9Q6 2 13 2T20 9V15" fill="none" stroke="#e8e8e2" strokeWidth="3" /><rect x="1" y="14" width="24" height="16" rx="2" fill="#616161" /></Art>
            <Cut $ml={20} $w={9} $right>r</Cut>
            <DarkField $w={192} $h={50} $ml={5} $size={22.5} $pad={9}>100%<Spin /></DarkField>
            <Cut $ml={14} $w={13} $right>a</Cut>
            <DarkField $w={184} $h={48} $ml={17} $size={22.5} $pad={9}>0.0 °<Spin /></DarkField>
            <StatusCheck $ml={14} $size={26}><CheckMark /></StatusCheck>
            <StatusText $ml={14} $w={104} $ls={-0.2}>Render</StatusText>
            <Art $ml={-2} width="28" height="28" viewBox="0 0 28 28">
              <circle cx="14" cy="14" r="11" fill="#8c8c8c" stroke="#b9b9b9" strokeWidth="1.2" />
              <path d="M3 14H25M5 8H23M5 20H23M14 2V26M14 2Q5 14 14 26M14 2Q23 14 14 26" fill="none" stroke="#dcdcdc" strokeWidth="1.6" />
            </Art>
            <StatusText $ml={5} $w={166} $ls={-0.3}>EPSG:4326</StatusText>
            <Art $ml={0} width="34" height="36" viewBox="0 0 34 36"><path d="M16 4C7 4 1 10 1 16.5S7 29 16 29Q22 29 24 28L30 34L28 26Q32 22 32 16.5C32 10 25 4 16 4Z" fill="#5d5d5d" /><g fill="#fff"><circle cx="9" cy="16" r="2.6" /><circle cx="16.5" cy="16" r="2.6" /><circle cx="24" cy="16" r="2.6" /></g></Art>
          </Status>
        </Content>
      </Frame>

      <Dialog>
        <Title $h={45} $size={26} $c="#c4c4c4" $bg="linear-gradient(#5a5a5a, #4e4e4e)" $top="1px solid #8a8a8a">
          <Lights $gap={16} $left={16}><Dot $c="#ff5b52" /><Dot $c="#e6bf29" /><Dot $c="#53c22b" /></Lights>
          <TitleText $ls={-0.15}>{DIALOG_TITLE}</TitleText>
          <Balance $w={64} />
        </Title>
        <Title $h={49} $size={22.5} $c="#fff" $weight={500} $bg="linear-gradient(#4f4f4f, #434343)" $top="1px solid #747474" $bottom="1px solid #050505">
          <TitleText $ls={-0.22}>{DIALOG_TITLE}</TitleText>
        </Title>
        <Bar $h={63} $pad={4} $lift={5}>
          <Tools slot={52} size={32} items="pencil ~editRows ~saveEdits refresh |:8 ~addFeature ~trash -cut -copy -paste |:8 exprSelect rows invert deselect funnel moveTop panSel zoomSel |:8 -newField -delField abacus |:8 conditional |:10 >:78" />
        </Bar>
        <TableFrame>
          <Grid>
            <HeadRow>
              <Corner />
              {COLUMNS.map((t, i) => <HeadCell key={t} $last={i === 7}>{i === 7 ? "mea" : t}</HeadCell>)}
            </HeadRow>
            <Body>
              <Heads>{DATA.map((_, i) => <Head key={i}>{i + 1}</Head>)}</Heads>
              <Records>
                {DATA.map((r, i) => (
                  <Record key={i} $alt={i % 2 === 1}>
                    {r.map((v, j) => <Cell key={j} $alt={i % 2 === 1} $active={i === 0 && j === 0}>{v}</Cell>)}
                  </Record>
                ))}
              </Records>
            </Body>
          </Grid>
          <VTrack $thumb={236} />
          <ScrollCorner />
          <VTrack $thumb={0} />
          <HTrack $thumb={384} />
          <ScrollCorner />
        </TableFrame>
        <DialogFoot>
          <FilterButton>
            <Icon name="funnel" size={32} />
            <FilterText>Show All Features</FilterText>
            <FilterCaret $w={12} $c="#333" />
          </FilterButton>
          <FormSlot><Icon name="formView" size={32} /></FormSlot>
          <ViewButton><Icon name="table" size={32} /></ViewButton>
        </DialogFoot>
      </Dialog>

      <Mark $x={1809} $y={131} $w={82} $h={71} $round />
      <Mark $x={31} $y={840} $w={430} $h={94} />
      <Mark $x={588} $y={523} $w={179} $h={434} />
      <Mark $x={1444} $y={522} $w={172} $h={445} />
    </Desktop>
  );
}
